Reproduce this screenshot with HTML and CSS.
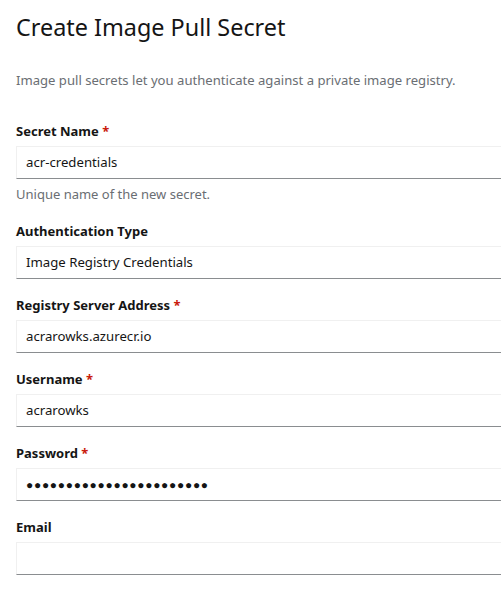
FILE: index.html
```html
<!DOCTYPE html>
<html lang="en">
<head>
<meta charset="utf-8">
<title>Create Image Pull Secret</title>
<link rel="stylesheet" href="styles.css">
</head>
<body>
<div class="page">
  <h1 class="title">Create Image Pull Secret</h1>
  <p class="intro">Image pull secrets let you authenticate against a private image registry.</p>
  <form class="form">
    <div class="group">
      <label class="label">Secret Name <span class="req">*</span></label>
      <div class="input">acr-credentials</div>
      <div class="helper">Unique name of the new secret.</div>
    </div>
    <div class="group">
      <label class="label">Authentication Type</label>
      <div class="input">Image Registry Credentials</div>
    </div>
    <div class="group">
      <label class="label">Registry Server Address <span class="req">*</span></label>
      <div class="input">acrarowks.azurecr.io</div>
    </div>
    <div class="group">
      <label class="label">Username <span class="req">*</span></label>
      <div class="input">acrarowks</div>
    </div>
    <div class="group">
      <label class="label">Password <span class="req">*</span></label>
      <div class="input password">●●●●●●●●●●●●●●●●●●●●●●●</div>
    </div>
    <div class="group">
      <label class="label">Email</label>
      <div class="input"></div>
    </div>
  </form>
</div>
</body>
</html>
```
FILE: styles.css
```css
html, body {
  margin: 0;
  padding: 0;
  background: #ffffff;
  overflow: hidden;
}
body {
  font-family: "Noto Sans", "Open Sans", sans-serif;
  color: #151515;
  width: 501px;
  height: 590px;
}
.page {
  padding: 11px 0 0 16px;
}
.title {
  margin: 0;
  font-size: 23.4px;
  font-weight: 400;
  line-height: 32px;
  color: #151515;
}
.intro {
  margin: 27px 0 0 0;
  font-size: 13.1px;
  line-height: 21px;
  color: #6a6e73;
}
.form {
  margin-top: 30px;
  display: flex;
  flex-direction: column;
  gap: 16px;
}
.group {
  display: flex;
  flex-direction: column;
}
.label {
  font-size: 13px;
  font-weight: 700;
  line-height: 21px;
  margin-bottom: 4px;
}
.req {
  color: #c9190b;
}
.input {
  box-sizing: border-box;
  height: 33px;
  border: 1px solid #f0f0f0;
  border-right: 0;
  border-bottom-color: #8a8d90;
  padding: 0 9px;
  font-size: 13.2px;
  line-height: 31px;
  color: #151515;
  white-space: nowrap;
  overflow: hidden;
}
.password {
  font-size: 12px;
  letter-spacing: 0.7px;
}
.helper {
  margin-top: 5px;
  font-size: 13px;
  line-height: 21px;
  color: #6a6e73;
}
```
